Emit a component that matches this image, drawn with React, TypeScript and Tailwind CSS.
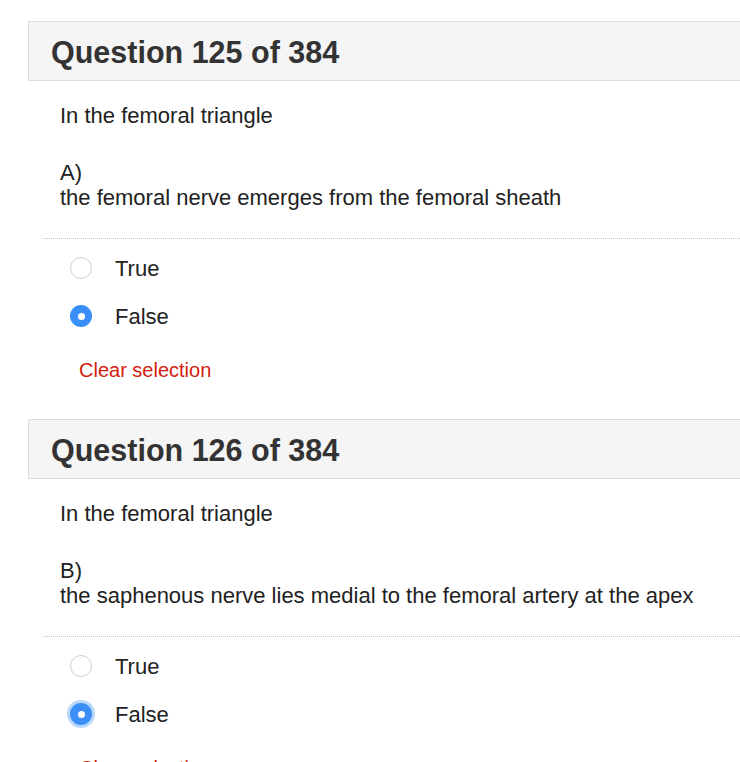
import { useState } from 'react';

type Question = {
  id: number;
  stem: string;
  letter: string;
  statement: string;
};

const TOTAL = 384;

const questions: Question[] = [
  { id: 125, stem: 'In the femoral triangle', letter: 'A)', statement: 'the femoral nerve emerges from the femoral sheath' },
  { id: 126, stem: 'In the femoral triangle', letter: 'B)', statement: 'the saphenous nerve lies medial to the femoral artery at the apex' },
];

function Radio({ checked, focused }: { checked: boolean; focused?: boolean }) {
  if (checked) {
    return (
      <span
        className={`flex h-[22px] w-[22px] items-center justify-center rounded-full bg-[#3a8ff7] ${
          focused ? 'ring-[3px] ring-[#3a8ff7]/35' : ''
        }`}
      >
        <span className="h-[7px] w-[7px] rounded-full bg-white" />
      </span>
    );
  }
  return <span className="h-[22px] w-[22px] rounded-full border-[1.5px] border-[#d0d0d0] bg-white" />;
}

function QuestionBlock({ q, focused }: { q: Question; focused?: boolean }) {
  const [answer, setAnswer] = useState<'true' | 'false' | null>('false');

  return (
    <section className="mb-[37px]">
      <div className="flex h-[60px] items-center border border-[#dddddd] bg-[#f5f5f5] pl-[22px]">
        <h2 className="pt-[3px] text-[30.5px] font-bold leading-none text-[#333333]">
          Question {q.id} of {TOTAL}
        </h2>
      </div>

      <div className="ml-[15px]">
        <div className="pl-[17px] text-[22px] leading-[24px] text-[#222222]">
          <p className="mt-[23px]">{q.stem}</p>
          <p className="mt-[33px]">{q.letter}</p>
          <p className="mt-[1px]">{q.statement}</p>
        </div>

        <div className="mt-[28px] border-t border-dotted border-[#c4c4c4]" />

        <div className="mt-[5px]">
          {(['true', 'false'] as const).map((opt) => (
            <label
              key={opt}
              className="flex h-[48px] cursor-pointer items-center pl-[27px] text-[22px] text-[#222222]"
              onClick={() => setAnswer(opt)}
            >
              <Radio checked={answer === opt} focused={focused && answer === opt} />
              <span className="ml-[23px]">{opt === 'true' ? 'True' : 'False'}</span>
            </label>
          ))}
        </div>

        <button
          type="button"
          className="mt-[18px] block pl-[36px] text-[20px] leading-[24px] text-[#d3200e]"
          onClick={() => setAnswer(null)}
        >
          Clear selection
        </button>
      </div>
    </section>
  );
}

export default function App() {
  return (
    <div className="h-screen overflow-hidden bg-white font-['Liberation_Sans',Arial,sans-serif]">
      <div className="w-[800px] pl-[28px] pt-[21px]">
        {questions.map((q, i) => (
          <QuestionBlock key={q.id} q={q} focused={i === 1} />
        ))}
      </div>
    </div>
  );
}
